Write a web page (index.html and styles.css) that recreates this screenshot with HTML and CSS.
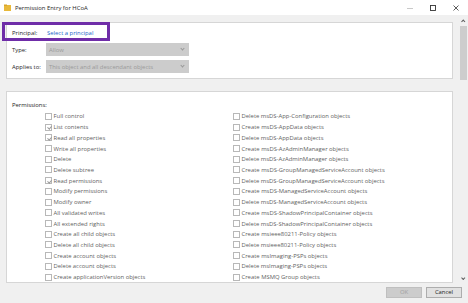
FILE: index.html
```html
<!DOCTYPE html>
<html>
  <head>
    <link rel="stylesheet" href="styles.css">
  </head>
  <body>
    <div class="window">
      <div class="titlebar">
        <svg class="folder" width="7" height="7" viewBox="0 0 7 7">
          <rect x="0" y="1" width="7" height="6" fill="#e8b93a"/>
          <rect x="0" y="0.5" width="3" height="1.5" fill="#d9a52a"/>
        </svg>
        <span class="title">Permission Entry for HCoA</span>
        <div class="controls">
          <span class="ctl"><svg width="8" height="8" viewBox="0 0 8 8"><line x1="1" y1="4.5" x2="7" y2="4.5" stroke="#bbb" stroke-width="0.8"/></svg></span>
          <span class="ctl"><svg width="8" height="8" viewBox="0 0 8 8"><rect x="1.5" y="1.5" width="5" height="5" fill="none" stroke="#333" stroke-width="0.9"/></svg></span>
          <span class="ctl"><svg width="8" height="8" viewBox="0 0 8 8"><path d="M1.5 1.5 L6.5 6.5 M6.5 1.5 L1.5 6.5" stroke="#333" stroke-width="0.8"/></svg></span>
        </div>
      </div>

      <div class="main">
        <div class="content">
          <div class="panel top-panel">
            <div class="row principal-row">
              <span class="lbl">Principal:</span>
              <a class="link">Select a principal</a>
            </div>
            <div class="row">
              <span class="lbl">Type:</span>
              <div class="select">Allow<span class="chev"></span></div>
            </div>
            <div class="row">
              <span class="lbl">Applies to:</span>
              <div class="select">This object and all descendant objects<span class="chev"></span></div>
            </div>
          </div>

          <div class="panel perm-panel">
            <div class="perm-title">Permissions:</div>
            <div class="perm-grid" id="grid"></div>
          </div>
        </div>

        <div class="scrollbar">
          <span class="arrow up"></span>
          <div class="thumb"></div>
          <span class="arrow down"></span>
        </div>
      </div>

      <div class="footer">
        <button class="btn disabled">OK</button>
        <button class="btn">Cancel</button>
      </div>

      <div class="highlight"></div>
    </div>

    <script>
      var left = [
        ['Full control', 0], ['List contents', 1], ['Read all properties', 1], ['Write all properties', 0],
        ['Delete', 0], ['Delete subtree', 0], ['Read permissions', 1], ['Modify permissions', 0],
        ['Modify owner', 0], ['All validated writes', 0], ['All extended rights', 0], ['Create all child objects', 0],
        ['Delete all child objects', 0], ['Create account objects', 0], ['Delete account objects', 0],
        ['Create applicationVersion objects', 0]
      ];
      var right = [
        'Delete msDS-App-Configuration objects', 'Create msDS-AppData objects', 'Delete msDS-AppData objects',
        'Create msDS-AzAdminManager objects', 'Delete msDS-AzAdminManager objects',
        'Create msDS-GroupManagedServiceAccount objects', 'Delete msDS-GroupManagedServiceAccount objects',
        'Create msDS-ManagedServiceAccount objects', 'Delete msDS-ManagedServiceAccount objects',
        'Create msDS-ShadowPrincipalContainer objects', 'Delete msDS-ShadowPrincipalContainer objects',
        'Create msieee80211-Policy objects', 'Delete msieee80211-Policy objects',
        'Create msImaging-PSPs objects', 'Delete msImaging-PSPs objects', 'Create MSMQ Group objects'
      ];
      var grid = document.getElementById('grid');
      function item(text, checked) {
        var d = document.createElement('div');
        d.className = 'perm';
        d.innerHTML = '<span class="box' + (checked ? ' checked' : '') + '"></span><span>' + text + '</span>';
        grid.appendChild(d);
      }
      for (var i = 0; i < left.length; i++) {
        item(left[i][0], left[i][1]);
        item(right[i], 0);
      }
    </script>
  </body>
</html>
```

FILE: styles.css
```css
* {
  box-sizing: border-box;
}

body {
  margin: 0;
  font-family: "Open Sans", "Noto Sans", sans-serif;
  font-size: 5.9px;
  color: #1e1e1e;
  background: #f0f0f0;
}

.window {
  position: relative;
  width: 468px;
  height: 303px;
  overflow: hidden;
  display: flex;
  flex-direction: column;
}

.titlebar {
  height: 15px;
  background: #fff;
  display: flex;
  align-items: center;
  padding-left: 4px;
  flex-shrink: 0;
}

.folder {
  margin-right: 4px;
}

.title {
  font-size: 5.9px;
  color: #1e1e1e;
}

.controls {
  margin-left: auto;
  display: flex;
  gap: 15px;
  padding-right: 8px;
}

.ctl svg {
  display: block;
}

.main {
  flex: 1;
  display: flex;
  min-height: 0;
}

.content {
  flex: 1;
  padding: 7px 6px 0 6px;
  display: flex;
  flex-direction: column;
  gap: 12px;
}

.panel {
  background: #fff;
  border: 1px solid #d6d6d6;
}

.top-panel {
  height: 57px;
  padding: 5px 0 0 5px;
  display: flex;
  flex-direction: column;
  gap: 4px;
}

.row {
  display: flex;
  align-items: center;
  height: 13px;
}

.principal-row {
  height: 10px;
  margin-bottom: 1px;
}

.lbl {
  width: 34px;
  flex-shrink: 0;
}

.link {
  color: #1a64c8;
  margin-left: 1px;
}

.select {
  width: 143px;
  height: 13px;
  background: #cccccc;
  color: #9a9a9a;
  display: flex;
  align-items: center;
  padding-left: 3px;
  position: relative;
}

.chev {
  position: absolute;
  right: 5px;
  top: 4px;
  width: 3px;
  height: 3px;
  border-right: 0.7px solid #999;
  border-bottom: 0.7px solid #999;
  transform: rotate(45deg);
}

.perm-panel {
  flex: 1;
  padding: 8px 0 0 5px;
  overflow: hidden;
}

.perm-title {
  height: 10px;
  line-height: 10px;
  margin-bottom: 1px;
}

.perm-grid {
  display: grid;
  grid-template-columns: 188px 1fr;
  grid-auto-rows: 10.73px;
  padding-left: 33px;
}

.perm {
  display: flex;
  align-items: center;
  color: #5f5f5f;
}

.box {
  width: 7px;
  height: 7px;
  border: 0.8px solid #b8b8b8;
  background: #fff;
  margin-right: 1.5px;
  flex-shrink: 0;
  position: relative;
}

.box.checked::after {
  content: "";
  position: absolute;
  left: 2px;
  top: 0.5px;
  width: 1.6px;
  height: 3.4px;
  border-right: 0.7px solid #999;
  border-bottom: 0.7px solid #999;
  transform: rotate(40deg);
}

.scrollbar {
  width: 9px;
  background: #f0f0f0;
  display: flex;
  flex-direction: column;
  align-items: center;
  padding-top: 3px;
}

.thumb {
  width: 7px;
  height: 54px;
  background: #cdcdcd;
  margin-top: 3px;
}

.arrow {
  width: 2.5px;
  height: 2.5px;
  border-left: 0.8px solid #606060;
  border-top: 0.8px solid #606060;
  transform: rotate(45deg);
  margin-top: 2px;
}

.arrow.down {
  transform: rotate(225deg);
  margin-top: auto;
  margin-bottom: 4px;
}

.footer {
  height: 20px;
  flex-shrink: 0;
  display: flex;
  justify-content: flex-end;
  align-items: center;
  gap: 4px;
  padding-right: 6px;
  padding-bottom: 2px;
}

.btn {
  font-family: "Open Sans", "Noto Sans", sans-serif;
  font-size: 5.9px;
  width: 36px;
  height: 11px;
  padding: 0;
  background: #e1e1e1;
  border: 1px solid #adadad;
  color: #1e1e1e;
}

.btn.disabled {
  background: #cccccc;
  border-color: #bfbfbf;
  color: #a0a0a0;
}

.highlight {
  position: absolute;
  left: 2px;
  top: 22px;
  width: 108px;
  height: 19px;
  border: 3px solid #6f2da8;
}
```
